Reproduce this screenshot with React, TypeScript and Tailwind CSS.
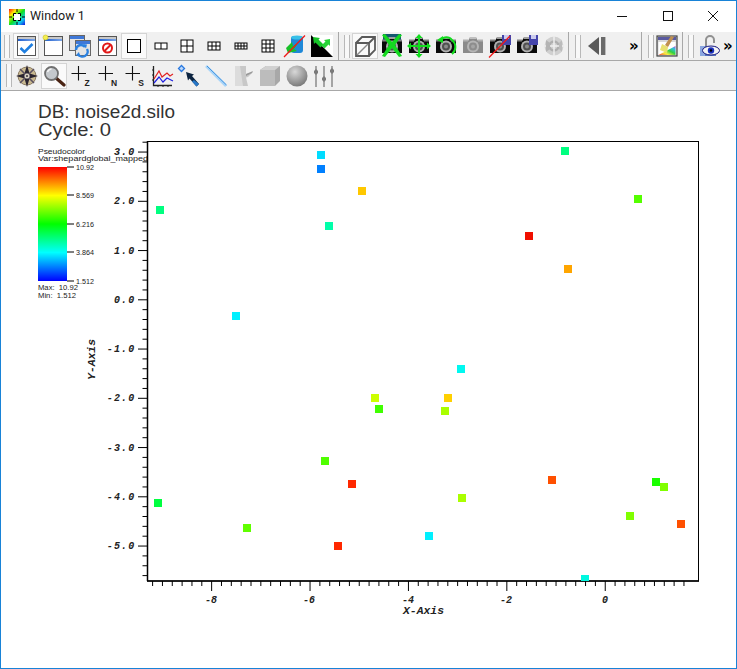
import React from "react";

const Win = ({ children }: { children?: React.ReactNode }) => (
  <svg width="24" height="24" viewBox="0 0 24 24">
    <defs>
      <linearGradient id="tb" x1="0" x2="1"><stop offset="0" stopColor="#1f5fd0" /><stop offset="1" stopColor="#7fa8e8" /></linearGradient>
    </defs>
    <rect x="3.500" y="2.500" width="18" height="19" fill="#fff" stroke="#555" />
    <rect x="4" y="3" width="17" height="2" fill="#c8c8c8" />
    <rect x="4" y="5" width="17" height="2" fill="url(#tb)" />
    {children}
  </svg>
);

const Layout = ({ w, h, cols, rows }: { w: number; h: number; cols: number; rows: number }) => {
  const x0 = 12 - w / 2;
  const y0 = 12 - h / 2;
  const ls: React.ReactNode[] = [];
  for (let i = 1; i < cols; i++) ls.push(<line key={"c" + i} x1={x0 + (w * i) / cols} x2={x0 + (w * i) / cols} y1={y0} y2={y0 + h} stroke="#000" />);
  for (let i = 1; i < rows; i++) ls.push(<line key={"r" + i} x1={x0} x2={x0 + w} y1={y0 + (h * i) / rows} y2={y0 + (h * i) / rows} stroke="#000" />);
  return (
    <svg width="24" height="24" viewBox="0 0 24 24">
      <rect x={x0} y={y0} width={w} height={h} fill="#fff" stroke="#000" />
      {ls}
    </svg>
  );
};

const CamBody = ({ gray }: { gray?: boolean }) => (
  <g>
    <path d="M2 7h5l1.500-3h7L17 7h5v12H2z" fill={gray ? "#8a8a8a" : "#0a0a0a"} />
    <rect x="2" y="5.500" width="5" height="2" fill={gray ? "#b0b0b0" : "#808080"} />
    <rect x="17" y="5.500" width="5" height="2" fill={gray ? "#b0b0b0" : "#808080"} />
    <rect x="8.500" y="3" width="7" height="2" fill={gray ? "#c0c0c0" : "#a0a0a0"} />
    <circle cx="12" cy="12.500" r="6" fill={gray ? "#b5b5b5" : "#b0b0b0"} />
    <circle cx="12" cy="12.500" r="4" fill={gray ? "#8d8d8d" : "#505050"} />
    <circle cx="12" cy="12.500" r="2" fill={gray ? "#a5a5a5" : "#8a8a8a"} />
  </g>
);

const G = "#12dc1e";

const Svg = ({ children }: { children: React.ReactNode }) => (
  <svg width="24" height="24" viewBox="0 0 24 24">{children}</svg>
);

const Disk = () => (
  <g>
    <rect x="14" y="1" width="9" height="10" fill="#4444aa" />
    <rect x="16" y="1" width="5" height="4" fill="#ccccee" />
  </g>
);

const icons: Record<string, React.ReactNode> = {
  active: (
    <Win><path d="M6.500 14l4 4 8-8" fill="none" stroke="#1f7fe0" strokeWidth="2.600" /></Win>
  ),
  add: (
    <Win><circle cx="4.500" cy="3.500" r="2.500" fill="#f4ee50" stroke="#c8c020" strokeWidth=".6" /></Win>
  ),
  copy: (
    <Svg>
      <rect x="1.500" y="1.500" width="15" height="15" fill="#e4e4e4" stroke="#666" />
      <rect x="2" y="2" width="14" height="3" fill="#3f78d8" />
      <rect x="7.500" y="6.500" width="15" height="15" fill="#e4e4e4" stroke="#666" />
      <rect x="8" y="7" width="14" height="3" fill="#3f78d8" />
      <path d="M8 16a5 5 0 0 1 9-3M19 15a5 5 0 0 1-9 5" fill="none" stroke="#2a80e0" strokeWidth="2.400" />
      <path d="M15 10l4 .5-1 4zM12 23l-4-2 3-3z" fill="#2a80e0" />
    </Svg>
  ),
  del: (
    <Win>
      <circle cx="12.500" cy="14" r="4.500" fill="none" stroke="#e01818" strokeWidth="2" />
      <line x1="9.500" y1="17" x2="15.500" y2="11" stroke="#e01818" strokeWidth="2" />
    </Win>
  ),
  l1: <Layout w={13} h={13} cols={1} rows={1} />,
  l2: <Layout w={12} h={6} cols={2} rows={1} />,
  l4: <Layout w={12} h={12} cols={2} rows={2} />,
  l6: <Layout w={12} h={8} cols={3} rows={2} />,
  l8: <Layout w={12} h={6} cols={4} rows={2} />,
  l9: <Layout w={12} h={12} cols={3} rows={3} />,
  spray: (
    <Svg>
      <rect x="8" y="2" width="12" height="17" rx="3" fill="#1e88d8" />
      <ellipse cx="14" cy="3.500" rx="6" ry="2" fill="#38c0e8" />
      <path d="M3 14l6-6 1 4 5-3-4 6 3 2-9 2z" fill="#18c028" />
      <line x1="1" y1="23" x2="22" y2="1.500" stroke="#f01818" strokeWidth="1.300" />
    </Svg>
  ),
  tri: (
    <Svg>
      <rect x="1" y="1" width="22" height="22" fill="#fff" />
      <path d="M1 1l22 22H1z" fill="#000" />
      <path d="M3 3l1 7 1.500-1.500 5 5 3-3-5-5L10 4z" fill="#16c428" />
      <path d="M20 5l-6 1 1.500 1.500-4 4 3 3 4-4L20 12z" fill="#28d438" />
    </Svg>
  ),
  box: (
    <Svg>
      <path d="M3 9h13v13H3zM3 9l6-6h13v13l-6 6M16 9l6-6" fill="none" stroke="#5a5a5a" strokeWidth="1.800" />
      <path d="M4 21L15 10" stroke="#8a8a8a" strokeWidth="1.500" />
    </Svg>
  ),
  camReset: (
    <Svg>
      <path d="M3 0h18v6H3z" fill="#145a70" />
      <CamBody />
      <path d="M2 1l3-1 7 8 7-8 3 1-7 10 7 11-3 1-7-9-7 9-3-1 7-11z" fill="#14d820" />
    </Svg>
  ),
  camMove: (
    <Svg>
      <CamBody />
      <path d="M12 3v18M2 12h20" stroke={G} strokeWidth="2" />
      <path d="M12 0l3.500 4h-7zM12 24l3.500-4h-7zM0 12l4-3.500v7zM24 12l-4-3.500v7z" fill={G} />
    </Svg>
  ),
  camRot: (
    <Svg>
      <CamBody />
      <path d="M7 6a7 7 0 0 1 11 0a9 9 0 0 1 0 14" fill="none" stroke={G} strokeWidth="2" />
      <path d="M3 6l6-4v7z" fill={G} />
    </Svg>
  ),
  camGray: (
    <Svg>
      <CamBody gray />
    </Svg>
  ),
  camNoSave: (
    <Svg>
      <CamBody />
      <Disk />
      <line x1="1" y1="23.500" x2="22" y2="2" stroke="#f01818" strokeWidth="1.300" />
    </Svg>
  ),
  camSave: (
    <Svg>
      <CamBody />
      <Disk />
    </Svg>
  ),
  globe: (
    <Svg>
      <circle cx="12" cy="12" r="9.500" fill="#d0d0d0" />
      <circle cx="12" cy="12" r="4.500" fill="none" stroke="#aeaeae" strokeWidth="2.500" />
      <path d="M12 2v20M2 12h20" stroke="#eee" strokeWidth="1.500" />
      <path d="M4 6l4 3v6l-4 3z" fill="#b4b4b4" />
      <path d="M20 6l-3 3v6l3 3z" fill="#bcbcbc" />
    </Svg>
  ),
  back: (
    <Svg>
      <path d="M14 3v18L3 12z" fill="#5a5a5a" />
      <rect x="16" y="3" width="5" height="18" fill="#6a6a6a" />
      <rect x="20" y="3" width="1" height="18" fill="#bbb" />
    </Svg>
  ),
  paint: (
    <svg width="24" height="24" viewBox="0 0 24 24">
      <defs>
        <linearGradient id="rb" x1="0" y1="1" x2="1" y2="0">
          <stop offset="0" stopColor="#f04040" /><stop offset=".3" stopColor="#f8f040" /><stop offset=".55" stopColor="#30d040" /><stop offset=".8" stopColor="#30c0e0" /><stop offset="1" stopColor="#d040d0" />
        </linearGradient>
      </defs>
      <rect x="2" y="2" width="20" height="20" fill="#d8d8d8" stroke="#444" strokeWidth="1.200" />
      <rect x="3" y="3" width="18" height="3" fill="#5a5aa0" />
      <rect x="3.500" y="8" width="17" height="13" fill="#fff" />
      <path d="M3.500 21l17-9v9z" fill="url(#rb)" />
      <path d="M5 16l2-6 6 3-1 6z" fill="#e8e070" />
      <path d="M10 11l6-9 3 1-6 10z" fill="#c09050" />
    </svg>
  ),
  lock: (
    <Svg>
      <path d="M8 12V6a5 5 0 0 1 10 0v3h-2V6a3 3 0 0 0-6 0v6z" fill="#909090" />
      <path d="M3 12h16v10H3z" fill="#5878c0" />
      <path d="M3 12h5v10H3z" fill="#8ca8e0" />
      <ellipse cx="14" cy="16.500" rx="8.500" ry="4.500" fill="#f4f4f4" stroke="#1a1a80" />
      <circle cx="14" cy="16.500" r="3.200" fill="#1a30c0" />
      <circle cx="14" cy="16.500" r="1.200" fill="#000" />
    </Svg>
  ),
  compass: (
    <Svg>
      <circle cx="12" cy="12" r="9" fill="#c8b890" stroke="#8a7a60" />
      <path d="M12 1l2.500 8.500L23 12l-8.500 2.500L12 23l-2.500-8.500L1 12l8.500-2.500z" fill="#2a2430" />
      <path d="M5 5l5 5 4 0 5-5-5 5 0 4 5 5-5-5-4 0-5 5 5-5 0-4z" fill="none" stroke="#5a5060" strokeWidth="1.500" />
      <circle cx="12" cy="12" r="2.500" fill="#d8d0c0" />
      <circle cx="12" cy="12" r="1" fill="#3a3440" />
    </Svg>
  ),
  zoom: (
    <Svg>
      <line x1="14" y1="14" x2="22" y2="21" stroke="#4a2414" strokeWidth="3.200" strokeLinecap="round" />
      <circle cx="9.500" cy="9.500" r="6.500" fill="#c4c8cc" stroke="#707070" strokeWidth="1.800" />
      <path d="M5.500 8a4.500 4.500 0 0 1 4-3" fill="none" stroke="#f4f4f4" strokeWidth="1.500" />
    </Svg>
  ),
  chart: (
    <Svg>
      <path d="M3.500 2v19.500H22" fill="none" stroke="#222" strokeWidth="1.300" />
      <path d="M2 6h2M2 11h2M2 16h2M8 21v2M13 21v2M18 21v2" stroke="#222" />
      <path d="M4 15l5-8 3 6 5-4 3 3 3-2" fill="none" stroke="#e02020" strokeWidth="1.200" />
      <path d="M4 19l5-6 4 5 4-4 6 3" fill="none" stroke="#2020e0" strokeWidth="1.200" />
    </Svg>
  ),
  pick: (
    <Svg>
      <path d="M4.500 1.500l3 3-3 3-3-3z" fill="#bcd8f8" stroke="#2878e0" strokeWidth="1.300" />
      <path d="M9 8l8 2.500-2 1.500 7 8-2.500 2.500-7-8-1.500 2z" fill="#0c2440" />
      <path d="M17 16l5 4-2.500 2.500-4.500-5z" fill="#2878c8" />
    </Svg>
  ),
  line: (
    <Svg>
      <line x1="2" y1="2" x2="22" y2="22" stroke="#a8d4f8" strokeWidth="2.500" />
      <line x1="3" y1="2" x2="22.500" y2="21" stroke="#3c90e0" strokeWidth="1" />
    </Svg>
  ),
  page: (
    <Svg>
      <path d="M4 2h11v8l7-2-5 5-2 .5 2 8.500H4z" fill="#c8c8c8" />
      <path d="M4 2h5l3 20H4z" fill="#dcdcdc" />
      <path d="M15 10l7-3-1 2-6 3z" fill="#9a9a9a" />
    </Svg>
  ),
  cube: (
    <Svg>
      <path d="M2 6l6-4h14v15l-5 5H2z" fill="#a8a8a8" />
      <path d="M2 6h15v16H2z" fill="#bcbcbc" />
      <path d="M2 6l6-4h14l-5 4z" fill="#d0d0d0" />
    </Svg>
  ),
  sphere: (
    <svg width="24" height="24" viewBox="0 0 24 24">
      <defs>
        <radialGradient id="sp" cx=".4" cy=".3" r=".8"><stop offset="0" stopColor="#d8d8d8" /><stop offset="1" stopColor="#6e6e6e" /></radialGradient>
      </defs>
      <circle cx="12" cy="12" r="10.500" fill="url(#sp)" />
    </svg>
  ),
  sliders: (
    <Svg>
      <path d="M4 2v21M12 2v21M20 2v21" stroke="#9c9c9c" strokeWidth="1.800" />
      <path d="M2 7l2-2 2 2v2l-2 2-2-2zM10 14l2-2 2 2v2l-2 2-2-2zM18 6l2-2 2 2v2l-2 2-2-2z" fill="#7a7a7a" />
    </Svg>
  ),
  plusZ: <PlusIcon label="Z" />,
  plusN: <PlusIcon label="N" />,
  plusS: <PlusIcon label="S" />,
};

function PlusIcon({ label }: { label: string }) {
  return (
    <svg width="24" height="24" viewBox="0 0 24 24">
      <path d="M9.500 2v14.500M2.500 9.500h14.500" stroke="#111" strokeWidth="1.100" />
      <text x="18" y="22" textAnchor="middle" className="font-['Liberation_Sans'] font-bold text-[8.500px]" fill="#222">{label}</text>
    </svg>
  );
}

const Grip = () => <div className="w-[6px] h-[23px] border-x border-[#b8b8b8] bg-[#f8f8f8] shrink-0" />;

const Slot = ({ name, w, on }: { name: string; w: string; on?: boolean }) => (
  <div className={`${w} flex items-center justify-center shrink-0`}>
    <div className={`w-[26px] h-[26px] flex items-center justify-center ${on ? "border border-[#d4d4d4] bg-[#fafafa]" : ""}`}>
      {icons[name]}
    </div>
  </div>
);

const More = () => (
  <span className="text-[15px] leading-none font-bold text-black font-['DejaVu_Sans'] tracking-[-1px]">»</span>
);

const points: [number, number, string][] = [
  [160, 210, "#00ff80"], [321, 155, "#00dcff"], [321, 169, "#0080ff"], [362, 191, "#ffc800"],
  [565, 151, "#00ff80"], [638, 199, "#55ff00"], [329, 226, "#00ffaa"], [529, 236, "#f00f00"],
  [568, 269, "#ffa500"], [236, 316, "#00f0ff"], [461, 369, "#00f8f0"], [375, 398, "#ccff00"],
  [448, 398, "#ffd000"], [379, 409, "#40ff00"], [445, 411, "#aaff00"], [325, 461, "#50ff00"],
  [352, 484, "#ff2800"], [158, 503, "#00ff40"], [462, 498, "#aaff00"], [552, 480, "#ff5000"],
  [656, 482, "#1aff00"], [664, 487, "#80ff00"], [630, 516, "#80ff00"], [681, 524, "#ff5000"],
  [247, 528, "#60ff00"], [338, 546, "#ff2800"], [429, 536, "#00f0ff"],
];

const mono = "font-['Liberation_Mono'] font-bold italic";
const sans = "font-['Liberation_Sans']";

function Plot() {
  const yTicks: React.ReactNode[] = [];
  for (let i = 0; i <= 44; i++) {
    const y = 142.2 + i * 9.85;
    const major = (i - 1 + 500) % 5 === 0;
    yTicks.push(<line key={i} x1={major ? 138 : 142.5} x2={147} y1={y} y2={y} stroke="#000" />);
  }
  const xTicks: React.ReactNode[] = [];
  for (let i = 0; i <= 54; i++) {
    const x = 152.6 + i * 9.84;
    const major = i % 10 === 6;
    xTicks.push(<line key={i} x1={x} x2={x} y1={581} y2={major ? 591 : 586} stroke="#000" />);
  }
  const yLabels = ["3.0", "2.0", "1.0", "0.0", "-1.0", "-2.0", "-3.0", "-4.0", "-5.0"];
  const xLabels: [string, number][] = [["-8", 211], ["-6", 309], ["-4", 408], ["-2", 506], ["0", 605]];
  const legend: [string, number][] = [["10.92", 167], ["8.569", 195], ["6.216", 224], ["3.864", 252], ["1.512", 281]];
  return (
    <svg className="block w-full flex-1" viewBox="1 91 735 577" width="735" height="577">
      <defs>
        <linearGradient id="cbar" x1="0" y1="0" x2="0" y2="1">
          <stop offset="0" stopColor="#ff0000" />
          <stop offset=".25" stopColor="#ffff00" />
          <stop offset=".5" stopColor="#00ff00" />
          <stop offset=".75" stopColor="#00ffff" />
          <stop offset="1" stopColor="#0000ff" />
        </linearGradient>
      </defs>
      <text x="38" y="118" textLength="137" lengthAdjust="spacingAndGlyphs" className={`${sans} text-[18px]`} fill="#333">DB: noise2d.silo</text>
      <text x="38" y="135.500" textLength="73" lengthAdjust="spacingAndGlyphs" className={`${sans} text-[18px]`} fill="#333">Cycle: 0</text>
      <text x="38" y="154" textLength="47" lengthAdjust="spacingAndGlyphs" className={`${sans} text-[7.500px]`} fill="#222">Pseudocolor</text>
      <text x="38" y="161" textLength="110" lengthAdjust="spacingAndGlyphs" className={`${sans} text-[7.500px]`} fill="#222">Var:shepardglobal_mapped</text>
      <rect x="38" y="167" width="29" height="114" fill="url(#cbar)" />
      {legend.map(([t, y]) => (
        <g key={t}>
          <line x1="67" x2="74" y1={y} y2={y} stroke="#000" />
          <text x="76" y={y + 2.5} textLength="18" lengthAdjust="spacingAndGlyphs" className={`${sans} text-[7px]`} fill="#222">{t}</text>
        </g>
      ))}
      <text x="38" y="290" textLength="40" lengthAdjust="spacingAndGlyphs" xmlSpace="preserve" className={`${sans} text-[7.500px]`} fill="#222">Max:  10.92</text>
      <text x="38" y="298" textLength="38" lengthAdjust="spacingAndGlyphs" xmlSpace="preserve" className={`${sans} text-[7.500px]`} fill="#222">Min:  1.512</text>

      <rect x="147.500" y="141.500" width="551" height="439.500" fill="#fff" stroke="#000" />
      {yTicks}
      {xTicks}
      <line x1="147" x2="699" y1="581" y2="581" stroke="#000" strokeWidth="1.500" />
      <line x1="147.500" x2="147.500" y1="141" y2="581" stroke="#000" strokeWidth="1.500" />
      {yLabels.map((t, i) => (
        <text key={t} x="135.500" y={155 + i * 49.25} textAnchor="end" className={`${mono} text-[10px] tracking-[1.200px]`} fill="#222">{t}</text>
      ))}
      {xLabels.map(([t, x]) => (
        <text key={t} x={x} y="603" textAnchor="middle" className={`${mono} text-[10px]`} fill="#222">{t}</text>
      ))}
      <text x="403" y="614" textLength="41" lengthAdjust="spacingAndGlyphs" className={`${mono} text-[10px]`} fill="#222">X-Axis</text>
      <text transform="translate(95 380) rotate(-90)" textLength="41" lengthAdjust="spacingAndGlyphs" className={`${mono} text-[10px]`} fill="#222">Y-Axis</text>
      {points.map(([x, y, c]) => (
        <rect key={x + "-" + y} x={x - 4} y={y - 4} width="8" height="8" fill={c} />
      ))}
      <rect x="581" y="575" width="8" height="6" fill="#00f8e0" />
    </svg>
  );
}

const Seg = ({ children, cls }: { children: React.ReactNode; cls?: string }) => (
  <div className={`flex items-center h-full border-r border-[#a8a8a8] shrink-0 ${cls ?? ""}`}>{children}</div>
);

export default function App() {
  return (
    <div className="w-[737px] h-[669px] border border-[#1883d7] bg-white flex flex-col overflow-hidden font-['Liberation_Sans']">
      <div className="h-[31px] flex items-center shrink-0 bg-white">
        <svg width="16" height="16" viewBox="0 0 16 16" className="ml-[8px]">
          <defs>
            <linearGradient id="ti" x1="0" y1="0" x2="1" y2="1" spreadMethod="repeat">
              <stop offset="0" stopColor="#ff1010" /><stop offset=".25" stopColor="#ffee00" /><stop offset=".5" stopColor="#10e020" /><stop offset=".75" stopColor="#10d0f0" /><stop offset="1" stopColor="#1010e0" />
            </linearGradient>
          </defs>
          <rect width="16" height="16" fill="url(#ti)" />
          <rect x="5" y="5" width="6" height="6" fill="#fff" />
          <path d="M4.500 7V4.500H7M9 4.500h2.500V7M11.500 9v2.500H9M7 11.500H4.500V9" fill="none" stroke="#000" />
          <path d="M8 0v3M8 13v3M0 8h3M13 8h3" stroke="#000" />
        </svg>
        <span className="ml-[5px] text-[12.500px] text-[#1a1a1a] font-['Roboto']">Window 1</span>
        <div className="ml-auto flex h-full">
          {[
            <path key="a" d="M0 5.500h10" stroke="#111" />,
            <rect key="b" x=".5" y=".5" width="9" height="9" fill="none" stroke="#111" />,
            <path key="c" d="M0 0l10 10M10 0L0 10" stroke="#111" />,
          ].map((p, i) => (
            <div key={i} className="w-[45.500px] flex items-center justify-center pb-[1px]">
              <svg width="10" height="10" viewBox="0 0 10 10">{p}</svg>
            </div>
          ))}
        </div>
      </div>
      <div className="h-[29px] flex items-center shrink-0 bg-[#f0f0f0] border-b border-[#a8a8a8]">
        <Seg cls="w-[338px]">
          <div className="ml-[3px]"><Grip /></div>
          <div className="ml-[3px] flex">
            {["active", "add", "copy", "del", "l1", "l2", "l4", "l6", "l8", "l9", "spray", "tri"].map((n, i) => (
              <Slot key={n} name={n} w="w-[26.850px]" on={i === 0 || i === 4} />
            ))}
          </div>
        </Seg>
        <Seg cls="w-[230px]">
          <div className="ml-[5px]"><Grip /></div>
          <div className="ml-[1px] flex">
            {["box", "camReset", "camMove", "camRot", "camGray", "camNoSave", "camSave", "globe"].map((n, i) => (
              <Slot key={n} name={n} w="w-[27px]" on={i === 0} />
            ))}
          </div>
        </Seg>
        <Seg cls="w-[73px]">
          <div className="ml-[6px]"><Grip /></div>
          <div className="ml-[3px]"><Slot name="back" w="w-[26px]" /></div>
          <div className="ml-[19px]"><More /></div>
        </Seg>
        <Seg cls="w-[41px]">
          <div className="ml-[6px]"><Grip /></div>
          <Slot name="paint" w="w-[26px]" />
        </Seg>
        <div className="flex items-center h-full">
          <div className="ml-[5px]"><Grip /></div>
          <div className="ml-[2px]"><Slot name="lock" w="w-[26px]" /></div>
          <div className="ml-[1px]"><More /></div>
        </div>
      </div>
      <div className="h-[30px] flex items-center shrink-0 bg-[#f0f0f0] border-b border-[#a8a8a8]">
        <div className="ml-[5px]"><Grip /></div>
        <div className="ml-[1px] flex">
          {["compass", "zoom", "plusZ", "plusN", "plusS", "chart", "pick", "line", "page", "cube", "sphere", "sliders"].map((n, i) => (
            <Slot key={n} name={n} w="w-[27px]" on={i === 1} />
          ))}
        </div>
      </div>
      <Plot />
    </div>
  );
}
